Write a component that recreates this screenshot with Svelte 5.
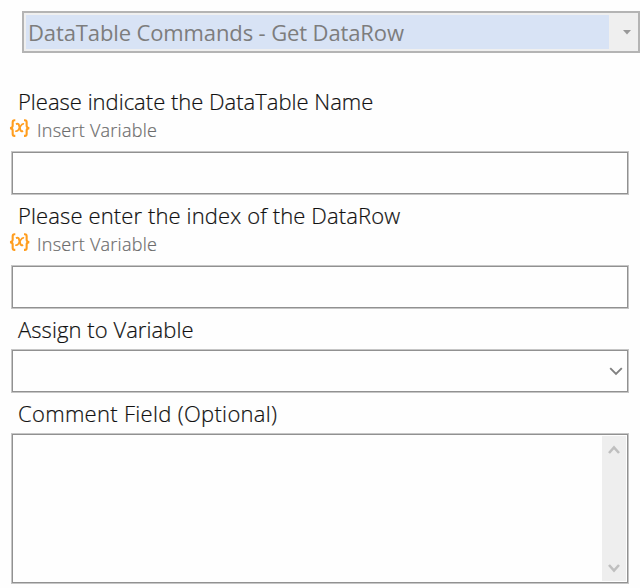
<script lang="ts">
    let command = 'DataTable Commands - Get DataRow';
    let tableName = '';
    let rowIndex = '';
    let variable = '';
    let comment = '';
</script>

{#snippet insertVariable()}
    <button type="button" class="insert-btn">
        <svg width="21" height="19" viewBox="0 0 20 18" fill="none" stroke="#ff9d1e">
            <path d="M6 1.2H5.2Q3.5 1.2 3.5 3V6.4Q3.5 8.4 1 8.6Q3.5 8.8 3.5 10.8V14.2Q3.5 16 5.2 16H6" stroke-width="2"/>
            <path d="M14.3 1.2H15.1Q16.8 1.2 16.8 3V6.4Q16.8 8.4 19.3 8.6Q16.8 8.8 16.8 10.8V14.2Q16.8 16 15.1 16H14.3" stroke-width="2"/>
            <path d="M6.6 4.8Q9.1 3.8 9.6 6.2L10.7 10Q11.3 12.4 13.4 11.2" stroke-width="1.9"/>
            <path d="M14.3 4.7Q12.5 4 10.9 6.9L9.4 9.5Q8 12.1 6 11.4" stroke-width="1.6"/>
        </svg>
        <span>Insert Variable</span>
    </button>
{/snippet}

<form class="panel">
    <div class="command-select">
        <span class="command-value">{command}</span>
        <svg width="8" height="5" viewBox="0 0 8 5"><path d="M0 0H8L4 4.6Z" fill="#999"/></svg>
    </div>

    <div class="form-group">
        <label for="table">Please indicate the DataTable Name</label>
        {@render insertVariable()}
        <input type="text" id="table" bind:value={tableName}/>
    </div>

    <div class="form-group">
        <label for="index" class="l-index">Please enter the index of the DataRow</label>
        {@render insertVariable()}
        <input type="text" id="index" bind:value={rowIndex}/>
    </div>

    <div class="form-group">
        <label for="variable" class="l-variable">Assign to Variable</label>
        <div class="combo">
            <input type="text" id="variable" bind:value={variable}/>
            <svg width="14" height="9" viewBox="0 0 14 9" fill="none" stroke="#808080" stroke-width="1.9">
                <path d="M1.2 1.2L7 7L12.8 1.2"/>
            </svg>
        </div>
    </div>

    <div class="form-group">
        <label for="comment" class="l-comment">Comment Field (Optional)</label>
        <div class="comment-box">
            <textarea id="comment" bind:value={comment}></textarea>
            <div class="scrollbar">
                <svg width="12" height="10" viewBox="0 0 12 10" fill="none" stroke="#bfbfbf" stroke-width="2.6">
                    <path d="M1 8L6 2.5L11 8"/>
                </svg>
                <svg width="12" height="10" viewBox="0 0 12 10" fill="none" stroke="#bfbfbf" stroke-width="2.6">
                    <path d="M1 2L6 7.5L11 2"/>
                </svg>
            </div>
        </div>
    </div>
</form>

<style>
    :global(body) {
        background: #fefefe;
    }

    .panel, input, textarea, button {
        font-family: "Open Sans", "Noto Sans", sans-serif;
    }

    .panel {
        box-sizing: border-box;
        width: 640px;
        height: 588px;
        padding: 11px 11px 0 11px;
        overflow: hidden;
    }

    .command-select {
        box-sizing: border-box;
        display: flex;
        align-items: center;
        justify-content: space-between;
        width: 618px;
        height: 42px;
        margin: 0 0 34px 11px;
        padding: 0 7px 0 2px;
        border: 2px solid #b4b4b4;
        background: #efefef;
    }

    .command-value {
        box-sizing: border-box;
        flex: none;
        width: 583px;
        height: 34px;
        padding-left: 2px;
        line-height: 34px;
        font-size: 22px;
        letter-spacing: -0.12px;
        white-space: nowrap;
        color: #7d7d7d;
        background: #d8e3f5;
    }

    .form-group {
        display: flex;
        flex-direction: column;
        width: 618px;
    }

    label {
        height: 29px;
        padding-left: 7px;
        line-height: 29px;
        font-size: 22px;
        font-weight: 300;
        white-space: nowrap;
        color: #111;
        -webkit-text-stroke: 0.2px #111;
    }

    .l-index {
        letter-spacing: 0.12px;
    }

    .l-variable {
        letter-spacing: 0.06px;
    }

    .l-comment {
        letter-spacing: 0.3px;
    }

    .insert-btn {
        display: flex;
        align-items: center;
        gap: 7px;
        height: 35px;
        margin-left: -2px;
        padding: 0 0 8px;
        border: none;
        background: none;
        font-size: 18px;
        font-weight: 300;
        line-height: 26px;
        letter-spacing: 0.25px;
        color: #6c6c6c;
        -webkit-text-stroke: 0.2px #6c6c6c;
    }

    .insert-btn svg {
        margin-bottom: 2px;
    }

    input {
        box-sizing: border-box;
        width: 618px;
        height: 44px;
        margin: 0 0 6px;
        padding: 0 8px;
        border: 1px solid #c6c6c6;
        border-radius: 0;
        outline: none;
        background: #fefefe;
        box-shadow: inset 0 0 0 1px #919191;
        font-size: 20px;
    }

    .combo {
        box-sizing: border-box;
        display: flex;
        align-items: center;
        height: 44px;
        margin: 5px 0 6px;
        padding: 1px 5px 1px 1px;
        border: 1px solid #c6c6c6;
        box-shadow: inset 0 0 0 1px #919191;
    }

    .combo input {
        flex: 1;
        width: auto;
        height: 40px;
        margin: 0;
        border: none;
        box-shadow: none;
    }

    .comment-box {
        box-sizing: border-box;
        display: flex;
        height: 151px;
        margin-top: 5px;
        padding: 1px;
        border: 1px solid #c6c6c6;
        box-shadow: inset 0 0 0 1px #919191;
    }

    textarea {
        flex: 1;
        padding: 6px 8px;
        border: none;
        outline: none;
        resize: none;
        background: #fefefe;
        font-size: 20px;
    }

    .scrollbar {
        box-sizing: border-box;
        display: flex;
        flex-direction: column;
        align-items: center;
        justify-content: space-between;
        width: 24px;
        margin: 1px;
        padding: 9px 0 8px;
        background: #eee;
    }
</style>
